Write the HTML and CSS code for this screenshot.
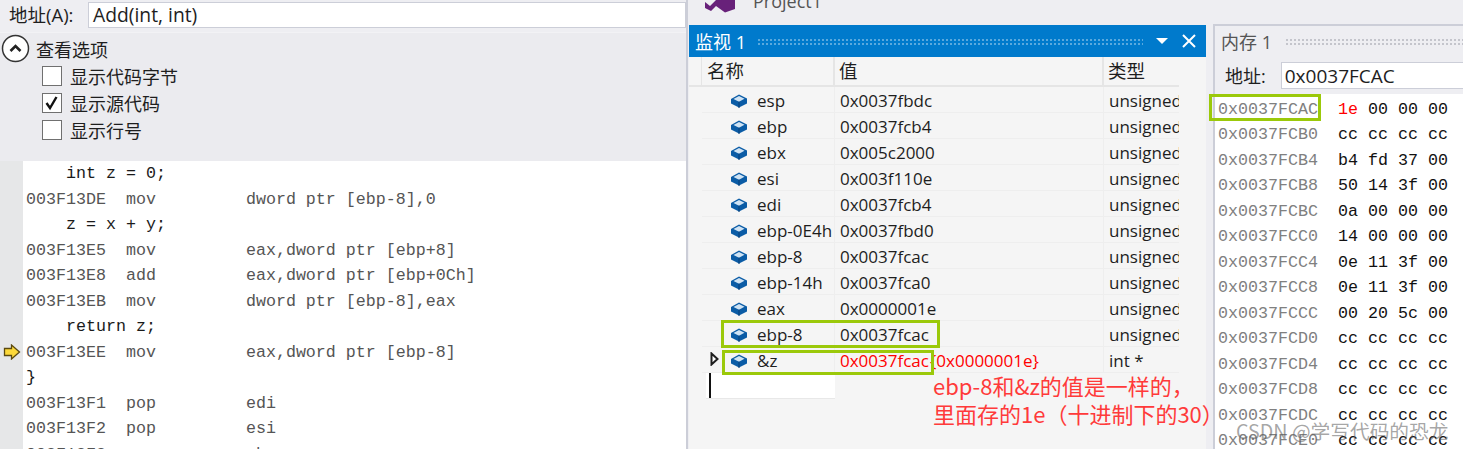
FILE: index.html
```html
<!DOCTYPE html>
<html lang="zh-CN">
<head>
  <meta charset="UTF-8">
  <title>Disassembly, Watch and Memory</title>
  <link rel="stylesheet" href="styles.css">
</head>
<body>
  <!-- Disassembly -->
  <section class="disasm">
    <div class="addr-bar">
      <label class="addr-label">地址(A):</label>
      <div class="addr-input">Add(int, int)</div>
    </div>
    <div class="options">
      <div class="options-head">
        <svg class="collapse" width="29" height="29" viewBox="0 0 29 29"><circle cx="14.5" cy="14.5" r="13" fill="#fff" stroke="#333" stroke-width="1.5"/><path d="M9.5 17l5-5 5 5" fill="none" stroke="#222" stroke-width="2.6"/></svg>
        <span>查看选项</span>
      </div>
      <div class="opt"><span class="check"></span>显示代码字节</div>
      <div class="opt"><span class="check"><svg width="18" height="18" viewBox="0 0 18 18"><path d="M3.5 9l3.500 5 6.500-11" fill="none" stroke="#111" stroke-width="2.4"/></svg></span>显示源代码</div>
      <div class="opt"><span class="check"></span>显示行号</div>
    </div>
    <div class="code">
      <div class="gutter">
        <svg class="next-arrow" width="18" height="16" viewBox="0 0 18 16"><path d="M1.500 4.500h7v-3.500l8 7-8 7v-3.500h-7z" fill="#fcd93a" stroke="#5b4a10" stroke-width="1.300"/></svg>
      </div>
      <pre class="listing"><span class="src">    int z = 0;</span>
003F13DE  mov         dword ptr [ebp-8],0
<span class="src">    z = x + y;</span>
003F13E5  mov         eax,dword ptr [ebp+8]
003F13E8  add         eax,dword ptr [ebp+0Ch]
003F13EB  mov         dword ptr [ebp-8],eax
<span class="src">    return z;</span>
003F13EE  mov         eax,dword ptr [ebp-8]
<span class="src">}</span>
003F13F1  pop         edi
003F13F2  pop         esi
003F13F3  pop         ebx</pre>
    </div>
  </section>

  <!-- Watch -->
  <section class="watch-col">
    <div class="project">
      <svg class="vs-logo" width="32" height="13" viewBox="0 0 32 13"><path d="M1 2l5 4 6-6h19v9l-10 3.500-9-6.500-5 5-6-3z" fill="#68217a"/></svg>
      <span>Project1</span>
    </div>
    <div class="watch">
      <div class="titlebar">
        <span class="title">监视 1</span>
        <span class="grip"></span>
        <span class="tri"></span>
        <svg width="16" height="16" viewBox="0 0 16 16"><path d="M2 2l12 12M14 2L2 14" stroke="#fff" stroke-width="2"/></svg>
      </div>
      <div class="table">
        <div class="row head"><span class="c-name">名称</span><span class="c-val">值</span><span class="c-type">类型</span></div>
        <div class="row"><span class="c-name"><svg class="cube" viewBox="0 0 16 14"><use href="#cube"/></svg>esp</span><span class="c-val">0x0037fbdc</span><span class="c-type">unsigned</span></div>
        <div class="row"><span class="c-name"><svg class="cube" viewBox="0 0 16 14"><use href="#cube"/></svg>ebp</span><span class="c-val">0x0037fcb4</span><span class="c-type">unsigned</span></div>
        <div class="row"><span class="c-name"><svg class="cube" viewBox="0 0 16 14"><use href="#cube"/></svg>ebx</span><span class="c-val">0x005c2000</span><span class="c-type">unsigned</span></div>
        <div class="row"><span class="c-name"><svg class="cube" viewBox="0 0 16 14"><use href="#cube"/></svg>esi</span><span class="c-val">0x003f110e</span><span class="c-type">unsigned</span></div>
        <div class="row"><span class="c-name"><svg class="cube" viewBox="0 0 16 14"><use href="#cube"/></svg>edi</span><span class="c-val">0x0037fcb4</span><span class="c-type">unsigned</span></div>
        <div class="row"><span class="c-name"><svg class="cube" viewBox="0 0 16 14"><use href="#cube"/></svg>ebp-0E4h</span><span class="c-val">0x0037fbd0</span><span class="c-type">unsigned</span></div>
        <div class="row"><span class="c-name"><svg class="cube" viewBox="0 0 16 14"><use href="#cube"/></svg>ebp-8</span><span class="c-val">0x0037fcac</span><span class="c-type">unsigned</span></div>
        <div class="row"><span class="c-name"><svg class="cube" viewBox="0 0 16 14"><use href="#cube"/></svg>ebp-14h</span><span class="c-val">0x0037fca0</span><span class="c-type">unsigned</span></div>
        <div class="row"><span class="c-name"><svg class="cube" viewBox="0 0 16 14"><use href="#cube"/></svg>eax</span><span class="c-val">0x0000001e</span><span class="c-type">unsigned</span></div>
        <div class="row"><span class="c-name"><svg class="cube" viewBox="0 0 16 14"><use href="#cube"/></svg>ebp-8</span><span class="c-val">0x0037fcac</span><span class="c-type">unsigned</span></div>
        <div class="row">
          <svg class="expander" width="9" height="14" viewBox="0 0 9 14"><path d="M1.500 1.500l6 5.500-6 5.500z" fill="#fff" stroke="#1e1e1e" stroke-width="2"/></svg>
          <span class="c-name"><svg class="cube" viewBox="0 0 16 14"><use href="#cube"/></svg>&amp;z</span><span class="c-val changed">0x0037fcac<span class="deref">{0x0000001e}</span></span><span class="c-type">int *</span>
        </div>
        <div class="row edit"><span class="c-name"><i class="caret"></i></span></div>
      </div>
    </div>
  </section>

  <!-- Memory -->
  <section class="memory">
    <div class="mem-title"><span>内存 1</span><span class="grip dark"></span></div>
    <div class="mem-addr"><label>地址:</label><div class="mem-input">0x0037FCAC</div></div>
    <pre class="mem-list"><span class="a">0x0037FCAC</span>  <span class="red">1e</span> 00 00 00
<span class="a">0x0037FCB0</span>  cc cc cc cc
<span class="a">0x0037FCB4</span>  b4 fd 37 00
<span class="a">0x0037FCB8</span>  50 14 3f 00
<span class="a">0x0037FCBC</span>  0a 00 00 00
<span class="a">0x0037FCC0</span>  14 00 00 00
<span class="a">0x0037FCC4</span>  0e 11 3f 00
<span class="a">0x0037FCC8</span>  0e 11 3f 00
<span class="a">0x0037FCCC</span>  00 20 5c 00
<span class="a">0x0037FCD0</span>  cc cc cc cc
<span class="a">0x0037FCD4</span>  cc cc cc cc
<span class="a">0x0037FCD8</span>  cc cc cc cc
<span class="a">0x0037FCDC</span>  cc cc cc cc
<span class="a">0x0037FCE0</span>  cc cc cc cc</pre>
  </section>

  <!-- Annotations drawn over the screenshot -->
  <div class="mark mark-ebp"></div>
  <div class="mark mark-z"></div>
  <div class="mark mark-mem"></div>
  <div class="note">ebp-8和&amp;z的值是一样的，<br>里面存的1e（十进制下的30）</div>
  <div class="watermark">CSDN @学写代码的恐龙</div>

  <svg width="0" height="0" class="defs"><defs>
    <g id="cube">
      <path d="M0 5l8-4.500 8 4v5l-8 4-8-4z" fill="#0b5ca6"/>
      <path d="M2.500 5l5.500-3 5.500 2.800-5.500 2.900z" fill="#cfe3f4"/>
      <path d="M8 7.700V14" stroke="#063f78" stroke-width="1"/>
    </g>
  </defs></svg>
</body>
</html>
```

FILE: styles.css
```css
:root {
  --chrome: #eeeef2;
  --line: #ccced8;
  --panel: #f5f5f5;
  --mono: "Liberation Mono", "DejaVu Sans Mono", monospace;
  --ui: "Open Sans", "Noto Sans CJK SC", sans-serif;
}

body {
  margin: 0;
  height: 449px;
  overflow: hidden;
  position: relative;
  display: flex;
  background: var(--chrome);
  color: #1e1e1e;
  font-family: var(--ui);
}
.defs { position: absolute; }

/* Disassembly */
.disasm { width: 686px; height: 449px; flex: none; display: flex; flex-direction: column; border-right: 2px solid var(--line); overflow: hidden; }
.addr-bar { height: 32px; flex: none; display: flex; align-items: flex-start; box-sizing: border-box; padding-top: 2px; }
.addr-label { width: 88px; flex: none; box-sizing: border-box; padding-left: 9px; font-size: 18.5px; line-height: 26px; }
.addr-input { flex: 1; height: 26px; box-sizing: border-box; border: 1px solid var(--line); background: #fff; font-size: 19.3px; line-height: 24px; padding-left: 4px; }
.options { height: 129px; flex: none; box-sizing: border-box; background: #ebebef; padding-top: 1px; border-top: 1px solid #f2f2f5; }
.options-head { display: flex; align-items: center; gap: 6px; height: 29px; margin-bottom: -1px; font-size: 18px; padding-left: 1px; }
.opt { display: flex; align-items: center; gap: 8px; height: 27px; padding-left: 42px; font-size: 18px; }
.check { width: 20px; height: 20px; box-sizing: border-box; border: 1px solid #707070; background: #fff; display: flex; align-items: center; justify-content: center; }
.code { flex: 1; display: flex; background: #fff; min-height: 0; }
.gutter { width: 23px; flex: none; background: #e6e7e8; position: relative; }
.next-arrow { position: absolute; left: 3px; top: 183px; }
.listing { margin: 0; padding-left: 3px; font-family: var(--mono); font-size: 16.67px; line-height: 25.5px; color: #555; }
.listing .src { color: #1a1a1a; }

/* Watch */
.watch-col { width: 517px; height: 449px; flex: none; display: flex; flex-direction: column; margin-left: 1px; }
.project { height: 25px; flex: none; display: flex; gap: 17px; padding-left: 15px; font-size: 18px; line-height: 2px; color: #555; overflow: hidden; }
.vs-logo { flex: none; }
.watch { flex: 1; background: var(--panel); }
.titlebar { height: 32px; background: #007acc; color: #fff; display: flex; align-items: center; padding: 0 9px 0 6px; }
.title { font-size: 18px; margin-right: 11px; }
.grip { flex: 1; height: 7px; background-image: radial-gradient(#5aa9de 1px, transparent 1.2px); background-size: 4px 4px; }
.grip.dark { background-image: radial-gradient(#c4c5cc 1px, transparent 1.2px); }
.tri { width: 0; height: 0; border: 6px solid transparent; border-top: 6px solid #fff; border-bottom: 0; margin: 0 13px; }
.table { width: 490px; position: relative; }
.row { display: flex; height: 26px; line-height: 28px; font-size: 17px; border-bottom: 1px solid #eeeeee; box-sizing: border-box; margin-left: 13px; }
.row span { flex: none; white-space: nowrap; overflow: hidden; box-sizing: border-box; }
.c-name { width: 133px; padding: 2px 0 0 29px; display: flex; align-items: center; border-right: 1px solid #eeeeee; }
.c-val { width: 269px; padding-left: 5px; border-right: 1px solid #eeeeee; }
.c-type { width: 75px; padding-left: 5px; }
.cube { width: 16px; height: 14px; margin-right: 10px; flex: none; }
.row.head { height: 30px; margin-left: 0; padding-left: 12px; font-size: 18.5px; border-bottom: 2px solid #e5e5e5; line-height: 28px; }
.row.head .c-name { width: 134px; padding: 0 0 0 5px; border-left: 1px solid #e5e5e5; }
.row.head .c-val, .row.head .c-name { border-right: 2px solid #e5e5e5; }
.row.head .c-val { padding-left: 4px; }
.row.head .c-type { padding-left: 4px; }
.expander { position: absolute; left: 21px; margin-top: 5px; }
.changed { color: #f00; overflow: visible !important; }
.deref { margin-left: 1px; }
.row.edit { width: 129px; background: #fff; margin-left: 17px; border-bottom: 1px solid #e8e8e8; }
.row.edit .c-name { width: 129px; padding: 0; border-right: 0; }
.caret { width: 2px; height: 25px; background: #111; margin-left: 3px; }

/* Memory */
.memory { flex: 1; height: 425px; margin: 24px 0 0 7px; border-top: 2px solid var(--line); border-left: 2px solid var(--line); min-width: 0; display: flex; flex-direction: column; box-sizing: border-box; overflow: hidden; }
.mem-title { height: 30px; flex: none; display: flex; align-items: center; gap: 13px; padding-left: 6px; font-size: 18px; color: #555; }
.mem-addr { height: 38px; flex: none; display: flex; align-items: center; font-size: 18px; padding-left: 10px; gap: 15px; }
.mem-input { flex: 1; height: 27px; background: #fff; border: 1px solid var(--line); border-right: 0; box-sizing: border-box; padding-left: 3px; line-height: 26px; font-size: 19px; }
.mem-list { margin: 0; padding: 2.500px 0 0 3px; background: #fff; flex: 1; min-height: 0; overflow: hidden; font-family: var(--mono); font-size: 16.67px; line-height: 25.5px; color: #111; }
.mem-list .a { color: #808080; }
.mem-list .red { color: #f00; }

/* Annotations */
.mark { position: absolute; box-sizing: border-box; border: 3px solid #9bc90a; }
.mark-ebp { left: 721px; top: 320px; width: 219px; height: 28px; }
.mark-z { left: 722px; top: 350px; width: 212px; height: 25px; }
.mark-mem { left: 1209px; top: 94px; width: 112px; height: 27px; }
.note { position: absolute; left: 933px; top: 371px; font-family: "Noto Sans CJK SC", sans-serif; font-size: 22px; line-height: 28px; color: #ff3a3a; white-space: nowrap; }
.watermark { position: absolute; left: 1236px; top: 416px; font-family: "Noto Sans CJK SC", sans-serif; font-size: 19.7px; color: rgba(90, 90, 90, 0.55); white-space: nowrap; }
```
